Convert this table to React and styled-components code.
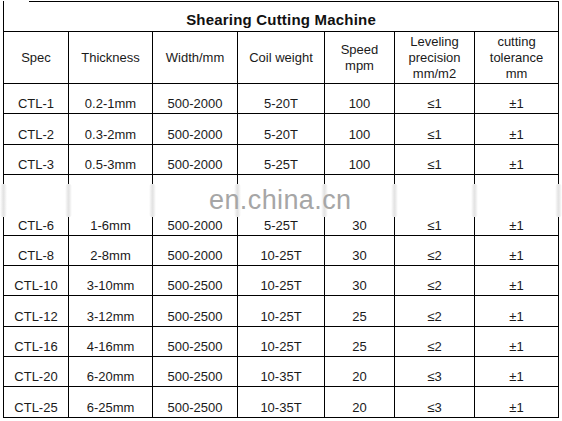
import React from 'react'
import styled, { createGlobalStyle } from 'styled-components'

const GlobalStyle = createGlobalStyle`
  html, body {
    margin: 0;
    padding: 0;
    background: #fff;
  }
  body {
    font-family: "Liberation Sans", Arial, sans-serif;
    color: #1a1a1a;
  }
`

const Sheet = styled.div`
  position: relative;
  width: 562px;
  height: 421px;
  padding: 1px 0 0 3px;
  box-sizing: border-box;
  overflow: hidden;
`

const Table = styled.table`
  border-collapse: collapse;
  table-layout: fixed;
  width: 556px;
  font-size: 13px;
`

const TitleCell = styled.th`
  height: 28px;
  padding: 0 0 2px;
  border: 1px solid #000;
  border-top: none;
  background: linear-gradient(#000, #000) no-repeat 25px 0 / calc(100% - 25px) 1px;
  font-size: 15px;
  font-weight: bold;
  line-height: 18px;
  letter-spacing: 0.2px;
  color: #111;
  text-align: center;
  vertical-align: bottom;
`

const HeadCell = styled.th`
  height: 51px;
  padding: 0 2px;
  border: 1px solid #000;
  font-weight: normal;
  line-height: 16px;
  text-align: center;
  vertical-align: middle;
`

const Cell = styled.td`
  position: relative;
  height: ${({ $tall }) => ($tall ? '58.7px' : '28.35px')};
  padding: 0 0 1px;
  border: 1px solid #000;
  line-height: 16px;
  text-align: center;
  vertical-align: bottom;
  white-space: nowrap;

  ${({ $tall }) =>
    $tall &&
    `
    &::before, &:last-child::after {
      content: '';
      position: absolute;
      top: 9px;
      height: 33px;
      width: 7px;
      left: -4px;
      border-radius: 3px;
      background: linear-gradient(to right, #fff 0%, #e4e4e4 45%, #e4e4e4 55%, #fff 100%);
    }
    &:last-child::after {
      left: auto;
      right: -4px;
    }
  `}
`

const Watermark = styled.div`
  position: absolute;
  left: 209px;
  top: 185px;
  font-size: 27px;
  line-height: 30px;
  letter-spacing: 0.4px;
  color: #a6a6a6;
  pointer-events: none;
`

const columns = [65, 84, 85, 87, 70, 80, 84]

const headers = [
  ['Spec'],
  ['Thickness'],
  ['Width/mm'],
  ['Coil weight'],
  ['Speed', 'mpm'],
  ['Leveling', 'precision', 'mm/m2'],
  ['cutting', 'tolerance', 'mm'],
]

const rows = [
  ['CTL-1', '0.2-1mm', '500-2000', '5-20T', '100', '≤1', '±1'],
  ['CTL-2', '0.3-2mm', '500-2000', '5-20T', '100', '≤1', '±1'],
  ['CTL-3', '0.5-3mm', '500-2000', '5-25T', '100', '≤1', '±1'],
  ['CTL-6', '1-6mm', '500-2000', '5-25T', '30', '≤1', '±1', true],
  ['CTL-8', '2-8mm', '500-2000', '10-25T', '30', '≤2', '±1'],
  ['CTL-10', '3-10mm', '500-2500', '10-25T', '30', '≤2', '±1'],
  ['CTL-12', '3-12mm', '500-2500', '10-25T', '25', '≤2', '±1'],
  ['CTL-16', '4-16mm', '500-2500', '10-25T', '25', '≤2', '±1'],
  ['CTL-20', '6-20mm', '500-2500', '10-35T', '20', '≤3', '±1'],
  ['CTL-25', '6-25mm', '500-2500', '10-35T', '20', '≤3', '±1'],
]

export default function App() {
  return (
    <>
      <GlobalStyle />
      <Sheet>
        <Table>
          <colgroup>
            {columns.map((w, i) => (
              <col key={i} style={{ width: w }} />
            ))}
          </colgroup>
          <thead>
            <tr>
              <TitleCell colSpan={7}>Shearing Cutting Machine</TitleCell>
            </tr>
            <tr>
              {headers.map((lines, i) => (
                <HeadCell key={i}>
                  {lines.map((l, j) => (
                    <div key={j}>{l}</div>
                  ))}
                </HeadCell>
              ))}
            </tr>
          </thead>
          <tbody>
            {rows.map(row => {
              const tall = row[7] === true
              return (
                <tr key={row[0]}>
                  {row.slice(0, 7).map((v, i) => (
                    <Cell key={i} $tall={tall}>
                      {v}
                    </Cell>
                  ))}
                </tr>
              )
            })}
          </tbody>
        </Table>
        <Watermark>en.china.cn</Watermark>
      </Sheet>
    </>
  )
}
